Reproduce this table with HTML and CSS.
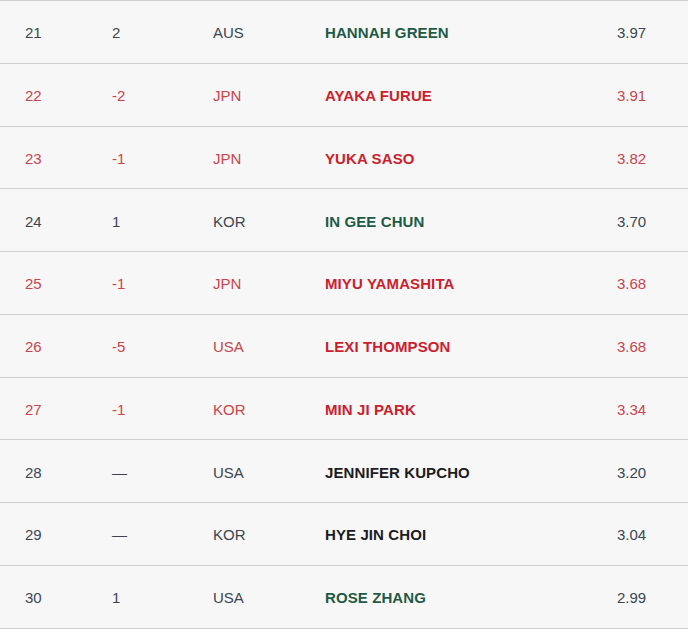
FILE: index.html
```html
<!DOCTYPE html>
<html>
<head>
<meta charset="utf-8">
<link rel="stylesheet" href="styles.css">
</head>
<body>
<div class="table">
  <div class="row"><span class="pos">21</span><span class="mv">2</span><span class="ctry">AUS</span><span class="name green">HANNAH GREEN</span><span class="pts">3.97</span></div>
  <div class="row red"><span class="pos">22</span><span class="mv">-2</span><span class="ctry">JPN</span><span class="name">AYAKA FURUE</span><span class="pts">3.91</span></div>
  <div class="row red"><span class="pos">23</span><span class="mv">-1</span><span class="ctry">JPN</span><span class="name">YUKA SASO</span><span class="pts">3.82</span></div>
  <div class="row"><span class="pos">24</span><span class="mv">1</span><span class="ctry">KOR</span><span class="name green">IN GEE CHUN</span><span class="pts">3.70</span></div>
  <div class="row red"><span class="pos">25</span><span class="mv">-1</span><span class="ctry">JPN</span><span class="name">MIYU YAMASHITA</span><span class="pts">3.68</span></div>
  <div class="row red"><span class="pos">26</span><span class="mv">-5</span><span class="ctry">USA</span><span class="name">LEXI THOMPSON</span><span class="pts">3.68</span></div>
  <div class="row red"><span class="pos">27</span><span class="mv">-1</span><span class="ctry">KOR</span><span class="name">MIN JI PARK</span><span class="pts">3.34</span></div>
  <div class="row"><span class="pos">28</span><span class="mv">—</span><span class="ctry">USA</span><span class="name black">JENNIFER KUPCHO</span><span class="pts">3.20</span></div>
  <div class="row"><span class="pos">29</span><span class="mv">—</span><span class="ctry">KOR</span><span class="name black">HYE JIN CHOI</span><span class="pts">3.04</span></div>
  <div class="row"><span class="pos">30</span><span class="mv">1</span><span class="ctry">USA</span><span class="name green">ROSE ZHANG</span><span class="pts">2.99</span></div>
</div>
</body>
</html>
```

FILE: styles.css
```css
html, body {
  margin: 0;
  padding: 0;
  background: #f7f7f7;
}
body {
  font-family: "Liberation Sans", Arial, sans-serif;
  font-size: 15px;
  color: #3b4650;
}
.table {
  width: 688px;
  border-top: 1px solid #cfcfcf;
}
.row {
  box-sizing: border-box;
  height: 62.75px;
  border-bottom: 1px solid #cfcfcf;
  display: grid;
  grid-template-columns: 87px 101px 112px 292px 1fr;
  align-items: center;
  padding-left: 25px;
  padding-top: 2px;
}
.row.red {
  color: #c9454b;
}
.name {
  font-weight: bold;
  font-size: 15px;
  letter-spacing: 0.1px;
}
.row.red .name {
  color: #cc1f2d;
}
.name.green {
  color: #1f5a46;
}
.name.black {
  color: #1c1c24;
}
```
